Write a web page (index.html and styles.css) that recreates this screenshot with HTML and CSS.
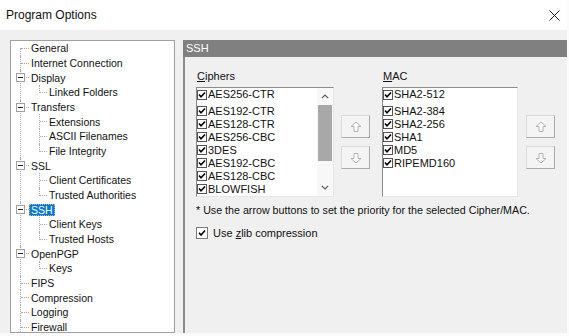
FILE: index.html
```html
<!DOCTYPE html>
<html>
<head>
<meta charset="utf-8">
<link rel="stylesheet" href="styles.css">
</head>
<body>
<div class="window">
  <div class="titlebar">
    <span class="title">Program Options</span>
    <svg class="close" width="11" height="11" viewBox="0 0 11 11"><path d="M0.5 0.5 L10.5 10.5 M10.5 0.5 L0.5 10.5" stroke="#1a1a1a" stroke-width="1" fill="none"/></svg>
  </div>
  <div class="body">
    <div class="tree">
      <ul class="tree-root">
        <li><div class="row"><span class="lbl">General</span></div></li>
        <li><div class="row"><span class="lbl">Internet Connection</span></div></li>
        <li><div class="row"><span class="exp"></span><span class="lbl">Display</span></div>
          <ul class="kids">
            <li><div class="row"><span class="lbl">Linked Folders</span></div></li>
          </ul>
        </li>
        <li><div class="row"><span class="exp"></span><span class="lbl">Transfers</span></div>
          <ul class="kids">
            <li><div class="row"><span class="lbl">Extensions</span></div></li>
            <li><div class="row"><span class="lbl">ASCII Filenames</span></div></li>
            <li><div class="row"><span class="lbl">File Integrity</span></div></li>
          </ul>
        </li>
        <li><div class="row"><span class="exp"></span><span class="lbl">SSL</span></div>
          <ul class="kids">
            <li><div class="row"><span class="lbl">Client Certificates</span></div></li>
            <li><div class="row"><span class="lbl">Trusted Authorities</span></div></li>
          </ul>
        </li>
        <li><div class="row"><span class="exp"></span><span class="lbl selected">SSH</span></div>
          <ul class="kids">
            <li><div class="row"><span class="lbl">Client Keys</span></div></li>
            <li><div class="row"><span class="lbl">Trusted Hosts</span></div></li>
          </ul>
        </li>
        <li><div class="row"><span class="exp"></span><span class="lbl">OpenPGP</span></div>
          <ul class="kids">
            <li><div class="row"><span class="lbl">Keys</span></div></li>
          </ul>
        </li>
        <li><div class="row"><span class="lbl">FIPS</span></div></li>
        <li><div class="row"><span class="lbl">Compression</span></div></li>
        <li><div class="row"><span class="lbl">Logging</span></div></li>
        <li><div class="row"><span class="lbl">Firewall</span></div></li>
      </ul>
    </div>
    <div class="panel">
      <div class="panel-head">SSH</div>
      <div class="panel-body">
        <div class="groups">
          <div class="group">
            <div class="glabel"><u>C</u>iphers</div>
            <div class="group-row">
              <div class="listbox ciphers">
                <div class="items">
                  <div class="item"><span class="cb"><svg width="8" height="8" viewBox="0 0 8 8"><path d="M1 3.5 L3 5.8 L7 1.5" stroke="#000" stroke-width="1.6" fill="none"/></svg></span>AES256-CTR</div>
                  <div class="item"><span class="cb"><svg width="8" height="8" viewBox="0 0 8 8"><path d="M1 3.5 L3 5.8 L7 1.5" stroke="#000" stroke-width="1.6" fill="none"/></svg></span>AES192-CTR</div>
                  <div class="item"><span class="cb"><svg width="8" height="8" viewBox="0 0 8 8"><path d="M1 3.5 L3 5.8 L7 1.5" stroke="#000" stroke-width="1.6" fill="none"/></svg></span>AES128-CTR</div>
                  <div class="item"><span class="cb"><svg width="8" height="8" viewBox="0 0 8 8"><path d="M1 3.5 L3 5.8 L7 1.5" stroke="#000" stroke-width="1.6" fill="none"/></svg></span>AES256-CBC</div>
                  <div class="item"><span class="cb"><svg width="8" height="8" viewBox="0 0 8 8"><path d="M1 3.5 L3 5.8 L7 1.5" stroke="#000" stroke-width="1.6" fill="none"/></svg></span>3DES</div>
                  <div class="item"><span class="cb"><svg width="8" height="8" viewBox="0 0 8 8"><path d="M1 3.5 L3 5.8 L7 1.5" stroke="#000" stroke-width="1.6" fill="none"/></svg></span>AES192-CBC</div>
                  <div class="item"><span class="cb"><svg width="8" height="8" viewBox="0 0 8 8"><path d="M1 3.5 L3 5.8 L7 1.5" stroke="#000" stroke-width="1.6" fill="none"/></svg></span>AES128-CBC</div>
                  <div class="item"><span class="cb"><svg width="8" height="8" viewBox="0 0 8 8"><path d="M1 3.5 L3 5.8 L7 1.5" stroke="#000" stroke-width="1.6" fill="none"/></svg></span>BLOWFISH</div>
                </div>
                <div class="scrollbar">
                  <div class="sb-btn"><svg width="8" height="5" viewBox="0 0 8 5"><path d="M0.8 4.2 L4 1 L7.2 4.2" stroke="#5a5a5a" stroke-width="1.2" fill="none"/></svg></div>
                  <div class="sb-thumb"></div>
                  <div class="sb-track"></div>
                  <div class="sb-btn"><svg width="8" height="5" viewBox="0 0 8 5"><path d="M0.8 0.8 L4 4 L7.2 0.8" stroke="#5a5a5a" stroke-width="1.2" fill="none"/></svg></div>
                </div>
              </div>
              <div class="btns">
                <button class="abtn"><svg width="12" height="12" viewBox="0 0 12 12"><path d="M6 1 L11 5.5 L8 5.5 L8 10.5 L4 10.5 L4 5.5 L1 5.5 Z" fill="#fafafa" stroke="#b4b4b4" stroke-width="1"/></svg></button>
                <button class="abtn"><svg width="12" height="12" viewBox="0 0 12 12"><path d="M6 11 L11 6.5 L8 6.5 L8 1.5 L4 1.5 L4 6.5 L1 6.5 Z" fill="#fafafa" stroke="#b4b4b4" stroke-width="1"/></svg></button>
              </div>
            </div>
          </div>
          <div class="group">
            <div class="glabel"><u>M</u>AC</div>
            <div class="group-row mac-row">
              <div class="listbox mac">
                <div class="items">
                  <div class="item"><span class="cb"><svg width="8" height="8" viewBox="0 0 8 8"><path d="M1 3.5 L3 5.8 L7 1.5" stroke="#000" stroke-width="1.6" fill="none"/></svg></span>SHA2-512</div>
                  <div class="item"><span class="cb"><svg width="8" height="8" viewBox="0 0 8 8"><path d="M1 3.5 L3 5.8 L7 1.5" stroke="#000" stroke-width="1.6" fill="none"/></svg></span>SHA2-384</div>
                  <div class="item"><span class="cb"><svg width="8" height="8" viewBox="0 0 8 8"><path d="M1 3.5 L3 5.8 L7 1.5" stroke="#000" stroke-width="1.6" fill="none"/></svg></span>SHA2-256</div>
                  <div class="item"><span class="cb"><svg width="8" height="8" viewBox="0 0 8 8"><path d="M1 3.5 L3 5.8 L7 1.5" stroke="#000" stroke-width="1.6" fill="none"/></svg></span>SHA1</div>
                  <div class="item"><span class="cb"><svg width="8" height="8" viewBox="0 0 8 8"><path d="M1 3.5 L3 5.8 L7 1.5" stroke="#000" stroke-width="1.6" fill="none"/></svg></span>MD5</div>
                  <div class="item"><span class="cb"><svg width="8" height="8" viewBox="0 0 8 8"><path d="M1 3.5 L3 5.8 L7 1.5" stroke="#000" stroke-width="1.6" fill="none"/></svg></span>RIPEMD160</div>
                </div>
              </div>
              <div class="btns">
                <button class="abtn"><svg width="12" height="12" viewBox="0 0 12 12"><path d="M6 1 L11 5.5 L8 5.5 L8 10.5 L4 10.5 L4 5.5 L1 5.5 Z" fill="#fafafa" stroke="#b4b4b4" stroke-width="1"/></svg></button>
                <button class="abtn"><svg width="12" height="12" viewBox="0 0 12 12"><path d="M6 11 L11 6.5 L8 6.5 L8 1.5 L4 1.5 L4 6.5 L1 6.5 Z" fill="#fafafa" stroke="#b4b4b4" stroke-width="1"/></svg></button>
              </div>
            </div>
          </div>
        </div>
        <p class="note">* Use the arrow buttons to set the priority for the selected Cipher/MAC.</p>
        <div class="check">
          <span class="bigcb"><svg width="10" height="10" viewBox="0 0 10 10"><path d="M2 4.8 L4 7 L8 2.5" stroke="#000" stroke-width="1.6" fill="none"/></svg></span>
          <span>Use <u>z</u>lib compression</span>
        </div>
      </div>
    </div>
  </div>
</div>
</body>
</html>
```

FILE: styles.css
```css
* { box-sizing: border-box; }
html, body { margin: 0; padding: 0; }
body {
  width: 569px;
  height: 336px;
  background: #fbfbfb;
  font-family: "Liberation Sans", Arial, sans-serif;
  font-size: 11px;
  color: #111;
  overflow: hidden;
}
.window {
  width: 567px;
  height: 333px;
  display: flex;
  flex-direction: column;
}
.titlebar {
  height: 30px;
  flex: none;
  background: #fff;
  display: flex;
  align-items: center;
  justify-content: space-between;
  padding: 0 7px 0 6px;
}
.title { font-size: 12px; }
.close { display: block; margin-top: 1px; }

.body {
  flex: 1;
  min-height: 0;
  background: #f0f0f0;
  display: flex;
  gap: 8px;
  padding: 10px 0 0 10px;
}

/* tree */
.tree {
  width: 165px;
  flex: none;
  background: #fff;
  border: 1px solid #a0a0a0;
  overflow: hidden;
  font-size: 10.5px;
}
.tree ul { list-style: none; margin: 0; padding: 0; }
.tree li { position: relative; }
.row {
  position: relative;
  height: 14.68px;
  display: flex;
  align-items: center;
  padding-left: 18px;
}
.kids .row { padding-left: 36px; }
.lbl {
  display: inline-block;
  padding: 0 2px;
  line-height: 12px;
  white-space: nowrap;
}
.lbl.selected {
  background: #0078d7;
  color: #fff;
  outline: 1px dotted #d9b36a;
  outline-offset: -1px;
}
.tree-root > li::before {
  content: "";
  position: absolute;
  left: 9px;
  top: 0;
  bottom: 0;
  border-left: 1px dotted #a8a8a8;
}
.tree-root > li:first-child::before { top: 7px; }
.tree-root > li > .row::before {
  content: "";
  position: absolute;
  left: 10px;
  width: 8px;
  top: 7px;
  border-top: 1px dotted #a8a8a8;
}
.kids > li::before {
  content: "";
  position: absolute;
  left: 28px;
  top: 0;
  bottom: 0;
  border-left: 1px dotted #a8a8a8;
}
.kids > li:last-child::before { bottom: auto; height: 8px; }
.kids .row::before {
  content: "";
  position: absolute;
  left: 29px;
  width: 7px;
  top: 7px;
  border-top: 1px dotted #a8a8a8;
}
.exp {
  position: absolute;
  left: 5px;
  top: 3px;
  width: 9px;
  height: 9px;
  border: 1px solid #a0a0a0;
  background: #fff;
  z-index: 1;
}
.exp::after {
  content: "";
  position: absolute;
  left: 1px;
  top: 3px;
  width: 5px;
  height: 1px;
  background: #222;
}

/* right panel */
.panel {
  flex: 1;
  display: flex;
  flex-direction: column;
}
.panel-head {
  height: 17px;
  flex: none;
  background: #808080;
  color: #fff;
  padding-left: 3px;
  line-height: 17px;
}
.panel-body {
  flex: 1;
  border-left: 2px solid #8c8c8c;
  padding: 12px 0 0 11px;
}
.groups { display: flex; gap: 12px; }
.glabel {
  height: 14px;
  line-height: 14px;
  margin-bottom: 4px;
  padding-left: 1px;
}
.group-row { display: flex; gap: 7px; }
.mac-row { gap: 8px; }
.listbox {
  height: 110px;
  background: #fff;
  border: 1px solid;
  border-color: #8a8a8a #e6e6e6 #e6e6e6 #8a8a8a;
  display: flex;
}
.ciphers { width: 138px; }
.mac { width: 136px; }
.items {
  flex: 1;
  display: flex;
  flex-direction: column;
}
.item {
  height: 13px;
  line-height: 13px;
  display: flex;
  align-items: center;
  gap: 1px;
  white-space: nowrap;
}
.item:first-child { margin-bottom: 3.5px; }
.cb {
  width: 10px;
  height: 10px;
  flex: none;
  border: 1px solid #555;
  background: #fff;
  display: flex;
  align-items: center;
  justify-content: center;
}
.cb svg { display: block; }
.scrollbar {
  width: 16px;
  flex: none;
  display: flex;
  flex-direction: column;
  background: #f8f8f8;
}
.sb-btn {
  height: 17px;
  display: flex;
  align-items: center;
  justify-content: center;
}
.sb-thumb {
  height: 56px;
  margin: 0 1px;
  background: #a8a8a8;
}
.sb-track { flex: 1; }

.btns {
  display: flex;
  flex-direction: column;
  gap: 8px;
  padding-top: 28px;
}
.abtn {
  width: 29px;
  height: 23px;
  padding: 0;
  border: 1px solid;
  border-color: #dadada #a9a9a9 #a9a9a9 #dadada;
  background: #f4f4f4;
  display: flex;
  align-items: center;
  justify-content: center;
}
.abtn svg { display: block; }

.note {
  margin: 7px 0 0 0;
  line-height: 13px;
  font-size: 10.7px;
  white-space: nowrap;
}
.check {
  margin-top: 10px;
  height: 12px;
  display: flex;
  align-items: center;
  gap: 5px;
}
.bigcb {
  width: 12px;
  height: 12px;
  flex: none;
  border: 1px solid #7a7a7a;
  background: #fff;
  display: flex;
  align-items: center;
  justify-content: center;
}
.bigcb svg { display: block; }
```
